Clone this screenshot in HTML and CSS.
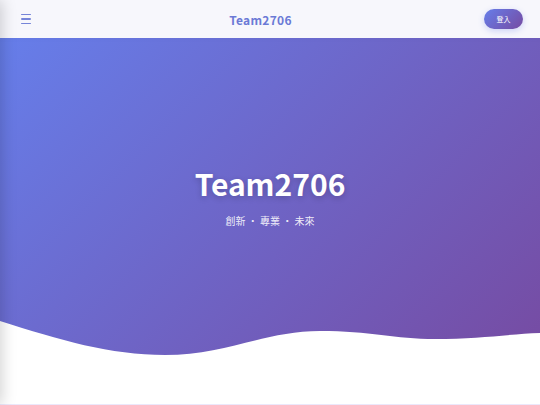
FILE: index.html
```html
<!DOCTYPE html>
<html lang="zh-Hant">
<head>
<meta charset="utf-8">
<title>Team2706</title>
<link rel="stylesheet" href="styles.css">
</head>
<body>
<aside class="sidebar"></aside>
<header class="topbar">
  <button class="menu-btn" aria-label="menu">
    <span></span><span></span><span></span>
  </button>
  <div class="brand">Team2706</div>
  <button class="login-btn">登入</button>
</header>
<section class="hero">
  <div class="hero-content">
    <h1 class="hero-title">Team2706</h1>
    <p class="hero-sub">創新 ・ 專業 ・ 未來</p>
  </div>
  <svg class="wave" viewBox="0 0 540 50" preserveAspectRatio="none">
    <path d="M0,11 C60,30 110,45 165,45 C225,45 265,21 320,21 C370,21 395,29 435,29 C480,29 510,24 540,23 L540,50 L0,50 Z" fill="#ffffff"/>
  </svg>
</section>
<section class="spacer"></section>
<section class="next"></section>
</body>
</html>
```
FILE: styles.css
```css
* { box-sizing: border-box; }
html, body { margin: 0; padding: 0; }
body {
  font-family: "Noto Sans CJK TC", "Noto Sans", sans-serif;
  background: #ffffff;
  height: 405px;
  overflow: hidden;
}
.sidebar {
  position: fixed;
  top: 0;
  left: -250px;
  width: 250px;
  height: 100%;
  background: #fff;
  box-shadow: 2px 0 14px rgba(0,0,0,0.18);
  z-index: 20;
}
.topbar {
  height: 38px;
  background: #f7f7fc;
  display: flex;
  align-items: center;
  justify-content: space-between;
  padding: 0 17px 0 21px;
  position: relative;
  z-index: 10;
  box-shadow: 0 1px 4px rgba(80,80,160,0.08);
}
.menu-btn {
  background: none;
  border: 0;
  padding: 0;
  width: 12px;
  display: flex;
  flex-direction: column;
  gap: 3px;
  cursor: pointer;
}
.menu-btn span {
  display: block;
  height: 1.6px;
  width: 10px;
  background: #7685d9;
  border-radius: 1px;
}
.brand {
  font-weight: 700;
  font-size: 12px;
  color: #6b7ad6;
  letter-spacing: 0.3px;
  margin-left: 4px;
}
.login-btn {
  width: 39px;
  height: 20px;
  border: 0;
  border-radius: 10px;
  background: linear-gradient(135deg, #667eea, #764ba2);
  color: #fff;
  font-family: "Noto Sans CJK TC", sans-serif;
  font-size: 7px;
  padding: 0;
  box-shadow: 0 2px 6px rgba(102,126,234,0.3);
}
.hero {
  position: relative;
  height: 322px;
  background: linear-gradient(135deg, #667eea 0%, #764ba2 100%);
  display: flex;
  align-items: center;
  justify-content: center;
}
.hero-content {
  text-align: center;
  color: #fff;
  margin-top: -8px;
}
.hero-title {
  margin: 0;
  font-size: 30px;
  font-weight: 700;
  line-height: 40px;
  text-shadow: 0 2px 6px rgba(0,0,0,0.2);
}
.hero-sub {
  margin: 10px 0 0;
  font-size: 10px;
  color: rgba(255,255,255,0.9);
}
.wave {
  position: absolute;
  left: 0;
  bottom: 0;
  width: 100%;
  height: 50px;
  display: block;
}
.spacer {
  height: 44px;
  background: #fff;
}
.next {
  height: 1px;
  background: #ebe8fb;
}
```
